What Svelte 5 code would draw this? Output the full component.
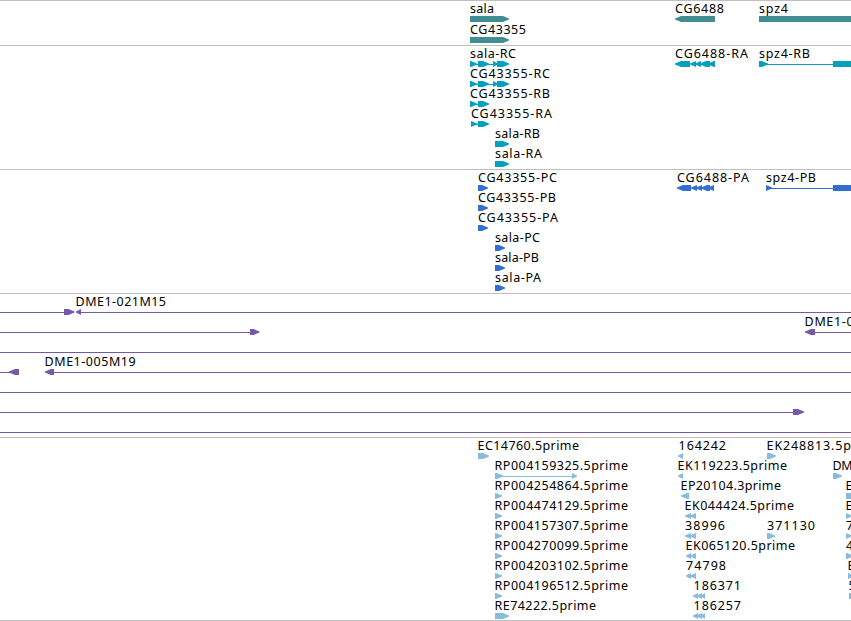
<script lang="ts">
    type Part = [kind: "r" | "l" | "b" | "line", start: number, end: number];

    interface Label {
        text: string;
        x: number;
        width: number;
    }

    interface Row {
        labels?: Label[];
        parts: Part[];
    }

    interface Track {
        name: string;
        height: number;
        pitch: number;
        rows: Row[];
    }

    const viewWidth = 851;

    function label(text: string, x: number, width: number): Label {
        return { text, x, width };
    }

    const salaExons: Part[] = [
        ["line", 470, 500],
        ["r", 470, 477],
        ["r", 478, 489],
        ["r", 493, 498],
        ["r", 497, 509],
    ];

    const tracks: Track[] = [
        {
            name: "gene",
            height: 45,
            pitch: 21,
            rows: [
                {
                    labels: [label("sala", 470, 24), label("CG6488", 675, 49), label("spz4", 759, 29)],
                    parts: [["r", 470, 509], ["l", 675, 715], ["b", 759, 851]],
                },
                { labels: [label("CG43355", 470, 56)], parts: [["r", 470, 509]] },
            ],
        },
        {
            name: "transcript",
            height: 124,
            pitch: 20,
            rows: [
                {
                    labels: [label("sala-RC", 470, 46), label("CG6488-RA", 675, 73), label("spz4-RB", 759, 51)],
                    parts: [
                        ...salaExons,
                        ["l", 675, 690],
                        ["l", 690, 696],
                        ["l", 695, 701],
                        ["l", 700, 710],
                        ["l", 708, 715],
                        ["r", 759, 768],
                        ["line", 767, 833],
                        ["b", 833, 851],
                    ],
                },
                { labels: [label("CG43355-RC", 470, 80)], parts: salaExons },
                { labels: [label("CG43355-RB", 470, 80)], parts: [["r", 470, 477], ["line", 470, 480], ["r", 478, 489]] },
                { labels: [label("CG43355-RA", 471, 81)], parts: [["r", 471, 477], ["line", 471, 480], ["r", 478, 489]] },
                { labels: [label("sala-RB", 495, 45)], parts: [["r", 495, 509]] },
                { labels: [label("sala-RA", 495, 47)], parts: [["r", 495, 509]] },
            ],
        },
        {
            name: "protein",
            height: 124,
            pitch: 20,
            rows: [
                {
                    labels: [label("CG43355-PC", 478, 79), label("CG6488-PA", 677, 72), label("spz4-PB", 766, 50)],
                    parts: [
                        ["r", 478, 488],
                        ["l", 677, 691],
                        ["l", 691, 697],
                        ["l", 696, 702],
                        ["l", 701, 710],
                        ["l", 708, 714],
                        ["r", 766, 772],
                        ["line", 770, 833],
                        ["b", 833, 851],
                    ],
                },
                { labels: [label("CG43355-PB", 478, 78)], parts: [["r", 478, 488]] },
                { labels: [label("CG43355-PA", 478, 80)], parts: [["r", 478, 488]] },
                { labels: [label("sala-PC", 495, 45)], parts: [["r", 495, 505]] },
                { labels: [label("sala-PB", 495, 44)], parts: [["r", 495, 505]] },
                { labels: [label("sala-PA", 495, 46)], parts: [["r", 495, 505]] },
            ],
        },
        {
            name: "bac",
            height: 144,
            pitch: 20,
            rows: [
                {
                    labels: [label("DME1-021M15", 75.6, 90.4)],
                    parts: [["line", 0, 66], ["r", 64, 74.5], ["l", 76, 81], ["line", 79, 851]],
                },
                {
                    labels: [label("DME1-0", 804.6, 49)],
                    parts: [["line", 0, 252], ["r", 250, 259.5], ["l", 805, 815], ["line", 812, 851]],
                },
                { parts: [["line", 0, 851]] },
                {
                    labels: [label("DME1-005M19", 44.6, 91)],
                    parts: [["line", 0, 12], ["l", 9, 19], ["l", 45, 54], ["line", 52, 851]],
                },
                { parts: [["line", 0, 851]] },
                { parts: [["line", 0, 796], ["r", 793, 804]] },
                { parts: [["line", 0, 851]] },
            ],
        },
        {
            name: "est",
            height: 183,
            pitch: 20,
            rows: [
                {
                    labels: [label("EC14760.5prime", 477.6, 101.4), label("164242", 678.6, 47.4), label("EK248813.5p", 766.6, 84.4)],
                    parts: [["r", 478, 489], ["l", 678, 683], ["r", 767, 776]],
                },
                {
                    labels: [label("RP004159325.5prime", 494.6, 133.4), label("EK119223.5prime", 677.6, 109.4), label("DM", 832.6, 20)],
                    parts: [["r", 495, 503], ["line", 500, 573], ["r", 572, 577], ["l", 678, 683], ["r", 833, 842]],
                },
                {
                    labels: [label("RP004254864.5prime", 494.6, 133.4), label("EP20104.3prime", 680.6, 100.4), label("E", 845.6, 7)],
                    parts: [["r", 495, 502], ["l", 681, 689], ["b", 846, 851]],
                },
                {
                    labels: [label("RP004474129.5prime", 494.6, 133.4), label("EK044424.5prime", 684.6, 109.4), label("E", 845.6, 7)],
                    parts: [["r", 495, 502], ["l", 685, 691], ["l", 690, 696], ["r", 846, 852]],
                },
                {
                    labels: [label("RP004157307.5prime", 494.6, 133.4), label("38996", 685, 40), label("371130", 767, 48), label("7", 846, 7)],
                    parts: [["r", 495, 502], ["l", 685, 691], ["l", 690, 696], ["r", 767, 775], ["r", 846, 852]],
                },
                {
                    labels: [label("RP004270099.5prime", 494.6, 133.4), label("EK065120.5prime", 685.6, 109.4), label("4", 846, 7)],
                    parts: [["r", 495, 502], ["l", 686, 691], ["l", 690, 696], ["r", 846, 853]],
                },
                {
                    labels: [label("RP004203102.5prime", 494.6, 133.4), label("74798", 686, 40), label("E", 847.6, 7)],
                    parts: [["r", 495, 502], ["l", 686, 691], ["l", 690, 696], ["r", 848, 854]],
                },
                {
                    labels: [label("RP004196512.5prime", 494.6, 133.4), label("186371", 693.6, 47.4), label("5", 848.5, 7)],
                    parts: [["r", 495, 502], ["l", 693, 698], ["l", 697, 702], ["l", 701, 705], ["b", 849, 851]],
                },
                {
                    labels: [label("RE74222.5prime", 494.6, 101.4), label("186257", 693.6, 47.4)],
                    parts: [["r", 495, 509], ["l", 693, 698], ["l", 697, 702], ["l", 701, 705]],
                },
            ],
        },
    ];

    // y is the top of the 6px high glyph
    function shape([kind, start, end]: Part, y: number): string {
        if (kind === "line") return `M${start} ${y + 3}H${end}V${y + 4}H${start}Z`;
        if (kind === "b") return `M${start} ${y}H${end}V${y + 6}H${start}Z`;
        const head = Math.min(6, end - start);
        if (kind === "r") {
            const neck = end - head;
            return `M${start} ${y}H${neck}L${end} ${y + 2.6}V${y + 3.4}L${neck} ${y + 6}H${start}Z`;
        }
        const neck = start + head;
        return `M${end} ${y}H${neck}L${start} ${y + 2.6}V${y + 3.4}L${neck} ${y + 6}H${end}Z`;
    }
</script>

<main class="browser">
    {#each tracks as track}
        <section class="track {track.name}">
            <svg width={viewWidth} height={track.height - 1} viewBox="0 1 {viewWidth} {track.height - 1}">
                {#each track.rows as row, i}
                    {#each row.parts as part}
                        <path d={shape(part, 16 + i * track.pitch)} />
                    {/each}
                    {#each row.labels ?? [] as item}
                        <text x={item.x} y={13 + i * track.pitch} textLength={item.width}>{item.text}</text>
                    {/each}
                {/each}
            </svg>
        </section>
    {/each}
</main>

<style>
    :global(body) {
        margin: 0;
        background: #fff;
    }

    .browser {
        width: 851px;
        height: 621px;
        box-sizing: border-box;
        overflow: hidden;
        background: #fff;
    }

    .track {
        border-top: 1px solid #bfbfbf;
    }

    .track:last-child {
        border-bottom: 1px solid #bfbfbf;
    }

    svg {
        display: block;
        overflow: hidden;
    }

    text {
        font-family: "Noto Sans", "Open Sans", sans-serif;
        font-size: 12.5px;
        fill: #000;
    }

    .gene path {
        fill: #408e93;
    }

    .transcript path {
        fill: #059fc0;
    }

    .protein path {
        fill: #326fcf;
    }

    .bac path {
        fill: #7559aa;
    }

    .est path {
        fill: #87bcde;
    }
</style>
